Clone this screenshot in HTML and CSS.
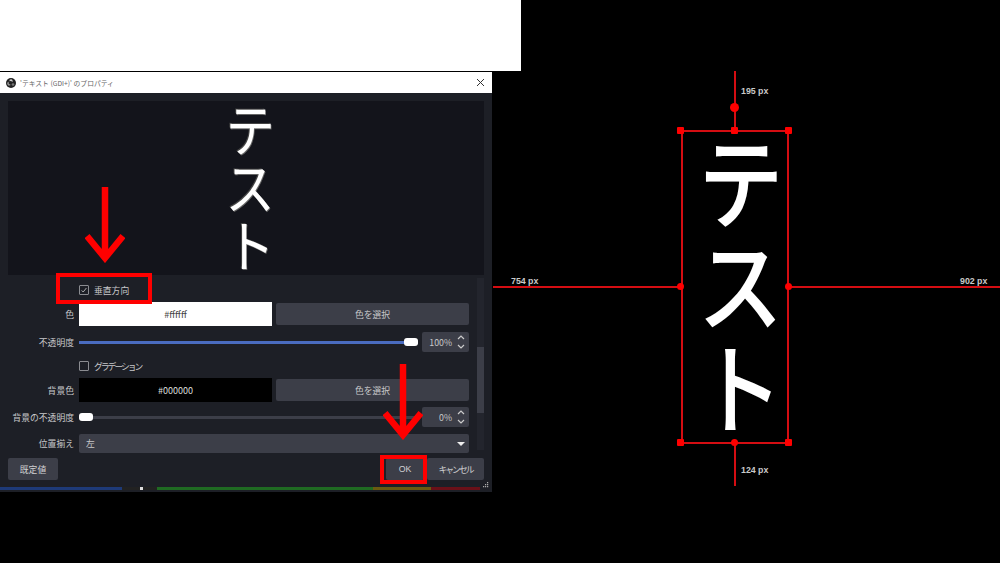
FILE: index.html
```html
<!DOCTYPE html>
<html lang="ja">
<head>
<meta charset="utf-8">
<title>テキスト (GDI+) のプロパティ</title>
<link rel="stylesheet" href="styles.css">
</head>
<body>
<main class="stage">
  <div class="left">
    <div class="whitebar"></div>
    <section class="dialog">
      <header class="titlebar">
        <svg class="logo" viewBox="0 0 12 12"><circle cx="6" cy="6" r="6" fill="#222"/><path d="M6 1.5a2 2 0 0 1 1.6 3.2A2.6 2.6 0 0 0 4.2 4 2 2 0 0 1 6 1.5z" fill="#ccc"/><path d="M2 8a2 2 0 0 1 1.4-3.4A2.6 2.6 0 0 0 5.6 8 2 2 0 0 1 2 8z" fill="#999"/><circle cx="8.4" cy="7.8" r="1.6" fill="#777"/></svg>
        <span class="titletext">'テキスト (GDI+)' のプロパティ</span>
        <svg class="close" viewBox="0 0 9 9"><path d="M1 1l7 7M8 1l-7 7" stroke="#333" stroke-width="1" fill="none"/></svg>
      </header>
      <div class="preview"><span class="previewtext">テスト</span></div>
      <div class="formwrap">
        <div class="form">
          <div class="row checkrow first">
            <span></span>
            <label class="check"><span class="box"><svg viewBox="0 0 10 10"><path d="M2 5.5l2 2 4-5" stroke="#ccc" stroke-width="1" fill="none"/></svg></span>垂直方向</label>
          </div>
          <div class="row colorrow">
            <span class="lbl">色</span>
            <div class="colorfields"><div class="swatch white">#ffffff</div><div class="btn">色を選択</div></div>
          </div>
          <div class="row sliderrow opacity">
            <span class="lbl">不透明度</span>
            <div class="sliderfields">
              <div class="slider full"><span class="knob"></span></div>
              <div class="spin"><span>100%</span><svg viewBox="0 0 10 18"><path d="M2 6l3-3 3 3M2 12l3 3 3-3" stroke="#ccc" stroke-width="1.2" fill="none"/></svg></div>
            </div>
          </div>
          <div class="row checkrow grad">
            <span></span>
            <label class="check"><span class="box"></span><span class="kana">グラデーション</span></label>
          </div>
          <div class="row colorrow">
            <span class="lbl">背景色</span>
            <div class="colorfields"><div class="swatch black">#000000</div><div class="btn">色を選択</div></div>
          </div>
          <div class="row sliderrow bgop">
            <span class="lbl">背景の不透明度</span>
            <div class="sliderfields">
              <div class="slider empty"><span class="knob"></span></div>
              <div class="spin"><span>0%</span><svg viewBox="0 0 10 18"><path d="M2 6l3-3 3 3M2 12l3 3 3-3" stroke="#ccc" stroke-width="1.2" fill="none"/></svg></div>
            </div>
          </div>
          <div class="row selectrow">
            <span class="lbl">位置揃え</span>
            <div class="select"><span>左</span><svg viewBox="0 0 8 4"><path d="M0 0h8L4 4z" fill="#eee"/></svg></div>
          </div>
        </div>
        <div class="scrolltrack"><span class="scrollthumb"></span></div>
      </div>
      <footer class="buttons">
        <div class="fbtn default">既定値</div>
        <div class="right">
          <div class="fbtn ok">OK</div>
          <div class="fbtn cancel"><span class="kana">キャンセル</span></div>
        </div>
      </footer>
      <div class="strip">
        <span class="s1"></span><span class="s2"><i class="tick"></i></span><span class="s3"></span><span class="s4"></span><span class="s5"></span>
      </div>
      <svg class="grip" viewBox="0 0 6 6"><path d="M4 0h1.200v1.200H4zM2 2h1.200v1.200H2zM4 2h1.200v1.200H4zM0 4h1.200v1.200H0zM2 4h1.200v1.200H2zM4 4h1.200v1.200H4z" fill="#aaa"/></svg>
    </section>

    <div class="redbox box-check"></div>
    <div class="redbox box-ok"></div>
    <svg class="arrow arrow1" viewBox="0 0 40 76"><path d="M20 0v72M2 49l18 22 18-22" stroke="#f00" stroke-width="6.500" fill="none"/></svg>
    <svg class="arrow arrow2" viewBox="0 0 40 76"><path d="M20 0v72M2 49l18 22 18-22" stroke="#f00" stroke-width="6.500" fill="none"/></svg>
  </div>

  <div class="canvas">
    <span class="line h hl"></span>
    <span class="line h hr"></span>
    <span class="line v vt"></span>
    <span class="line v vb"></span>
    <div class="bounds"><span class="bigtext">テスト</span></div>
    <span class="dot d1"></span><span class="dot d2"></span><span class="dot d3"></span>
    <span class="dot d4"></span><span class="dot d5"></span>
    <span class="dot d6"></span><span class="dot d7"></span><span class="dot d8"></span>
    <span class="dot d9"></span>
    <span class="px p-top">195 px</span>
    <span class="px p-left">754 px</span>
    <span class="px p-right">902 px</span>
    <span class="px p-bottom">124 px</span>
  </div>
</main>
</body>
</html>
```

FILE: styles.css
```css
* { box-sizing: border-box; }
html, body { margin: 0; padding: 0; background: #000; }
body { font-family: "Noto Sans CJK JP", "Liberation Sans", sans-serif; }
.stage { display: flex; width: 1000px; height: 563px; overflow: hidden; background: #000; }
.left { position: relative; width: 521px; flex: none; }
.whitebar { height: 71px; background: #fff; margin-bottom: 1px; }
.dialog { position: relative; width: 492px; height: 420px; background: #1d1f26; display: flex; flex-direction: column; }

.titlebar { height: 21px; background: #fff; display: flex; align-items: center; padding: 0 7px 0 6px; }
.logo { width: 10px; height: 10px; flex: none; }
.titletext { font-size: 6.8px; color: #666; margin-left: 4px; flex: 1; }
.close { width: 9px; height: 9px; }

.preview { margin: 8px 8px 0; height: 174px; background: #13141b; display: flex; justify-content: center; }
.previewtext { writing-mode: vertical-rl; text-orientation: upright; white-space: nowrap; font-size: 57.5px; letter-spacing: .5px; line-height: 58px; color: #fff; margin-left: 8px; font-weight: 400; transform: scaleX(.88); text-shadow: 1px 1px 0 #666, -1px -1px 0 #444; }

.formwrap { display: flex; padding: 3px 8px 0 0; height: 179px; }
.form { flex: 1; padding-right: 8px; display: flex; flex-direction: column; font-size: 8.8px; color: #c8c8ca; }
.row { display: grid; grid-template-columns: 74px 1fr; column-gap: 5px; align-items: center; }
.lbl { text-align: right; }
.checkrow { height: 20px; }
.checkrow.first { height: 24px; }
.checkrow.grad { padding-bottom: 4px; }
.check { display: flex; align-items: center; gap: 5px; }
.kana { letter-spacing: -2px; }
.box { width: 10px; height: 10px; border: 1px solid #8b8c91; border-radius: 1px; display: block; }
.box svg { display: block; width: 8px; height: 8px; }
.colorrow { height: 24px; }
.colorfields { display: grid; grid-template-columns: 193px 193px; column-gap: 4px; height: 24px; }
.swatch { display: flex; align-items: center; justify-content: center; font-size: 9px; }
.swatch.white { background: #fff; color: #444; }
.swatch.black { background: #000; color: #ddd; }
.btn { background: #3c3e48; border-radius: 2px; display: flex; align-items: center; justify-content: center; height: 22px; margin-top: 1px; }
.sliderrow { height: 32px; }
.sliderrow.bgop { padding-bottom: 2px; }
.sliderfields { display: flex; align-items: center; justify-content: space-between; }
.slider { position: relative; width: 339px; height: 3px; background: #3c3e48; }
.slider.full { background: #4a6cc0; }
.knob { position: absolute; top: -3px; width: 14px; height: 8px; background: #fff; border-radius: 3px; }
.full .knob { right: 0; }
.empty .knob { left: 0; }
.spin { width: 47px; height: 20px; background: #3c3e48; border-radius: 2px; display: flex; align-items: center; justify-content: flex-end; gap: 4px; padding-right: 3px; }
.spin svg { width: 10px; height: 18px; }
.selectrow { height: 19px; }
.select { height: 19px; background: #3c3e48; display: flex; align-items: center; justify-content: space-between; padding: 0 4px 0 7px; border-radius: 2px; }
.select svg { width: 8px; height: 4px; }
.scrolltrack { width: 7px; height: 172px; background: #23252d; position: relative; flex: none; }
.scrollthumb { position: absolute; left: 0; top: 69px; width: 7px; height: 66px; background: #3c3e48; }

.buttons { display: flex; justify-content: space-between; padding: 0 8px; height: 23px; margin-top: 4px; }
.right { display: flex; gap: 3px; }
.fbtn { background: #3c3e48; color: #d0d0d2; font-size: 8.8px; height: 22px; display: flex; align-items: center; justify-content: center; border-radius: 2px; }
.default { width: 50px; }
.ok { width: 38px; font-family: "Liberation Sans", sans-serif; }
.cancel { width: 57px; }
.strip { display: flex; height: 3px; margin-top: 6px; padding-right: 12px; }
.strip span { display: block; height: 3px; }
.s1 { width: 122px; background: #1e3a78; }
.s2 { width: 35px; background: #222; position: relative; }
.tick { position: absolute; left: 18px; top: 0; width: 3px; height: 3px; background: #ddd; }
.s3 { width: 216px; background: #1f6a22; }
.s4 { width: 58px; background: #6a5a10; }
.s5 { width: 49px; background: #6a1018; }
.grip { position: absolute; right: 3px; bottom: 4px; width: 6px; height: 6px; }

.redbox { position: absolute; border: 4px solid #f00; }
.box-check { left: 56px; top: 273px; width: 96px; height: 31px; }
.box-ok { left: 380px; top: 455px; width: 47px; height: 29px; }
.arrow { position: absolute; width: 40px; height: 76px; }
.arrow1 { left: 85px; top: 187px; }
.arrow2 { left: 383px; top: 364px; }

.canvas { position: relative; flex: 1; }
.line { position: absolute; background: #d40d12; }
.line.h { height: 2px; top: 286px; }
.line.v { width: 2px; left: 213px; }
.hl { left: -28px; width: 188px; }
.hr { left: 267px; right: 0; }
.vt { top: 71px; height: 60px; }
.vb { top: 442px; height: 44px; }
.bounds { position: absolute; left: 160px; top: 130px; width: 108px; height: 314px; border: 2px solid #d40d12; display: flex; justify-content: center; }
.bigtext { writing-mode: vertical-rl; text-orientation: upright; white-space: nowrap; font-size: 102px; letter-spacing: 1px; line-height: 102px; color: #fff; font-weight: 500; transform: translateX(5px) scaleX(.86); }
.dot { position: absolute; width: 7px; height: 7px; background: #f00; border-radius: 1px; }
.d1 { left: 156px; top: 127px; }
.d2 { left: 210px; top: 127px; }
.d3 { left: 264px; top: 127px; }
.d4 { left: 156px; top: 283px; border-radius: 50%; }
.d5 { left: 264px; top: 283px; border-radius: 50%; }
.d6 { left: 156px; top: 439px; }
.d7 { left: 210px; top: 439px; border-radius: 50%; }
.d8 { left: 264px; top: 439px; }
.d9 { left: 209px; top: 103px; width: 9px; height: 9px; border-radius: 50%; }
.px { position: absolute; font-family: "Liberation Sans", sans-serif; font-weight: 700; font-size: 8.800px; color: #c9c9c9; white-space: nowrap; }
.p-top { left: 220px; top: 86px; }
.p-bottom { left: 220px; top: 465px; }
.p-left { left: -10px; top: 276px; }
.p-right { left: 439px; top: 276px; }
```
